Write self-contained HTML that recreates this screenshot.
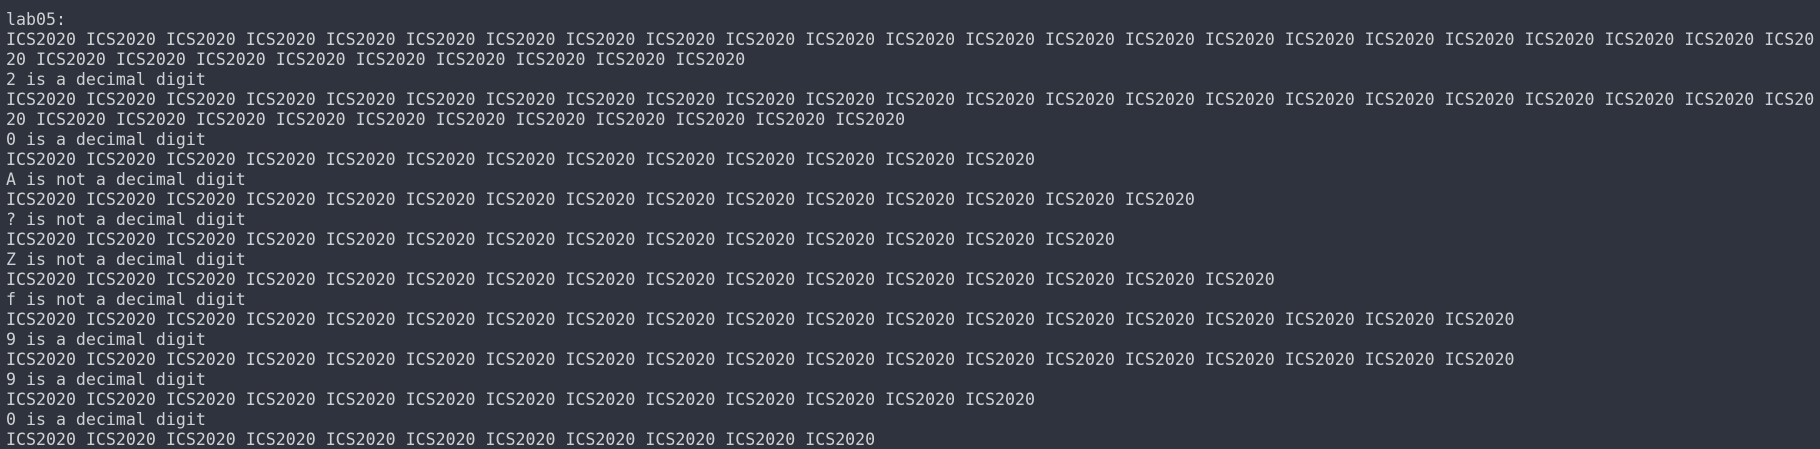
<!DOCTYPE html>
<html><head><meta charset="utf-8"><style>
html,body{margin:0;padding:0;background:#2e333d;width:1820px;height:449px;overflow:hidden}
pre{margin:0;padding:10px 0 0 6px;font-family:"DejaVu Sans Mono","Liberation Mono",monospace;font-size:16.6px;line-height:20px;color:#cfd1d4;white-space:pre}
</style></head><body><pre>lab05:
ICS2020 ICS2020 ICS2020 ICS2020 ICS2020 ICS2020 ICS2020 ICS2020 ICS2020 ICS2020 ICS2020 ICS2020 ICS2020 ICS2020 ICS2020 ICS2020 ICS2020 ICS2020 ICS2020 ICS2020 ICS2020 ICS2020 ICS20
20 ICS2020 ICS2020 ICS2020 ICS2020 ICS2020 ICS2020 ICS2020 ICS2020 ICS2020
2 is a decimal digit
ICS2020 ICS2020 ICS2020 ICS2020 ICS2020 ICS2020 ICS2020 ICS2020 ICS2020 ICS2020 ICS2020 ICS2020 ICS2020 ICS2020 ICS2020 ICS2020 ICS2020 ICS2020 ICS2020 ICS2020 ICS2020 ICS2020 ICS20
20 ICS2020 ICS2020 ICS2020 ICS2020 ICS2020 ICS2020 ICS2020 ICS2020 ICS2020 ICS2020 ICS2020
0 is a decimal digit
ICS2020 ICS2020 ICS2020 ICS2020 ICS2020 ICS2020 ICS2020 ICS2020 ICS2020 ICS2020 ICS2020 ICS2020 ICS2020
A is not a decimal digit
ICS2020 ICS2020 ICS2020 ICS2020 ICS2020 ICS2020 ICS2020 ICS2020 ICS2020 ICS2020 ICS2020 ICS2020 ICS2020 ICS2020 ICS2020
? is not a decimal digit
ICS2020 ICS2020 ICS2020 ICS2020 ICS2020 ICS2020 ICS2020 ICS2020 ICS2020 ICS2020 ICS2020 ICS2020 ICS2020 ICS2020
Z is not a decimal digit
ICS2020 ICS2020 ICS2020 ICS2020 ICS2020 ICS2020 ICS2020 ICS2020 ICS2020 ICS2020 ICS2020 ICS2020 ICS2020 ICS2020 ICS2020 ICS2020
f is not a decimal digit
ICS2020 ICS2020 ICS2020 ICS2020 ICS2020 ICS2020 ICS2020 ICS2020 ICS2020 ICS2020 ICS2020 ICS2020 ICS2020 ICS2020 ICS2020 ICS2020 ICS2020 ICS2020 ICS2020
9 is a decimal digit
ICS2020 ICS2020 ICS2020 ICS2020 ICS2020 ICS2020 ICS2020 ICS2020 ICS2020 ICS2020 ICS2020 ICS2020 ICS2020 ICS2020 ICS2020 ICS2020 ICS2020 ICS2020 ICS2020
9 is a decimal digit
ICS2020 ICS2020 ICS2020 ICS2020 ICS2020 ICS2020 ICS2020 ICS2020 ICS2020 ICS2020 ICS2020 ICS2020 ICS2020
0 is a decimal digit
ICS2020 ICS2020 ICS2020 ICS2020 ICS2020 ICS2020 ICS2020 ICS2020 ICS2020 ICS2020 ICS2020</pre></body></html>
